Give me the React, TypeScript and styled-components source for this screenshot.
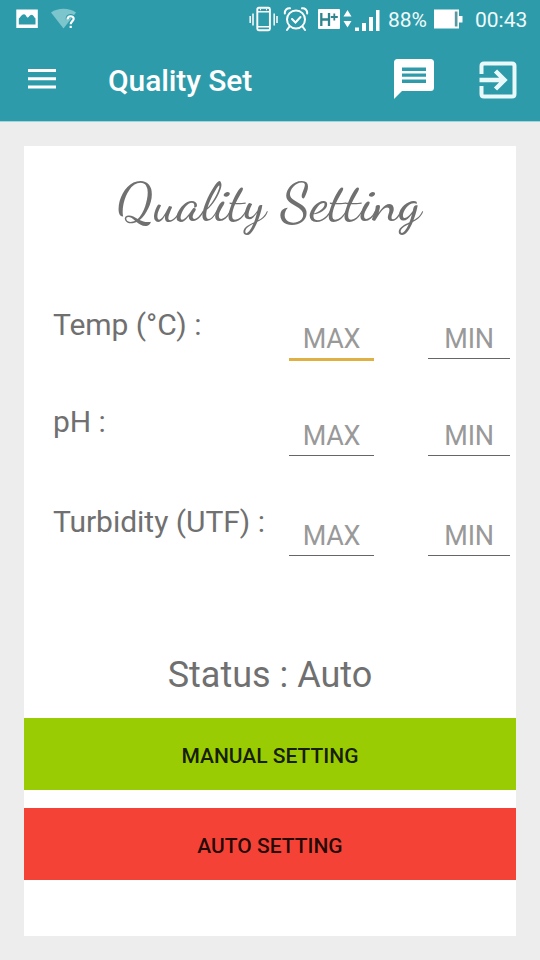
import React from "react";
import styled, { createGlobalStyle } from "styled-components";

const GlobalStyle = createGlobalStyle`
  * { box-sizing: border-box; }
  body { margin: 0; background: #ededed; font-family: Roboto, sans-serif; }
`;

const Screen = styled.div`
  width: 540px;
  height: 960px;
  display: flex;
  flex-direction: column;
  background: #ededed;
  overflow: hidden;
`;

const StatusBar = styled.div`
  flex: none;
  height: 38px;
  padding: 0 13px 0 16px;
  display: flex;
  align-items: center;
  background: #2e9baa;
  color: #fff;
`;

const Glyph = styled.svg<{ $gap?: number }>`
  display: block;
  flex: none;
  margin-right: ${(p) => p.$gap ?? 0}px;
`;

const StatusText = styled.span<{ $width: number; $gap?: number }>`
  width: ${(p) => p.$width}px;
  margin-right: ${(p) => p.$gap ?? 0}px;
  font-size: 21px;
  line-height: 38px;
  padding-top: 1px;
  white-space: nowrap;
  color: #effafa;
`;

const Spacer = styled.div`
  flex: 1;
`;

const Toolbar = styled.header`
  flex: none;
  height: 84px;
  padding: 0 22px 0 28px;
  display: flex;
  align-items: center;
  background: #2e9baa;
  border-bottom: 1px solid #a5d3d9;
  color: #fff;
`;

const ToolbarTitle = styled.h1`
  margin: 3px 0 0 52px;
  flex: 1;
  font-size: 30px;
  font-weight: 500;
  line-height: 36px;
  letter-spacing: -0.1px;
`;

const IconButton = styled.button<{ $gap?: number; $raise?: number }>`
  padding: 0 0 ${(p) => p.$raise ?? 0}px;
  border: 0;
  background: none;
  color: inherit;
  margin-right: ${(p) => p.$gap ?? 0}px;
`;

const Card = styled.main`
  margin: 24px 24px 0;
  height: 790px;
  background: #fff;
  display: flex;
  flex-direction: column;
  color: #707070;
`;

const Heading = styled.h2`
  margin: 19px 0 0;
  height: 78px;
  padding-right: 2px;
  line-height: 76px;
  text-align: center;
  font-family: "Dancing Script", "Liberation Serif", cursive;
  font-weight: 500;
  font-size: 54.5px;
  letter-spacing: 0.2px;
  white-space: nowrap;
`;

const Fields = styled.div`
  height: 415px;
  padding-top: 62px;
  display: grid;
  grid-template-rows: 97px 100px 97px;
`;

const FieldRow = styled.div`
  display: grid;
  grid-template-columns: 236px 85px 82px;
  padding-left: 29px;
  align-items: start;
`;

const Label = styled.label`
  font-size: 30px;
  line-height: 40px;
  letter-spacing: -0.03px;
  white-space: nowrap;
`;

const Entry = styled.input<{ $focused?: boolean; $shift?: number }>`
  width: 100%;
  min-width: 0;
  height: ${(p) => (p.$focused ? 56 : 54)}px;
  margin: 0 0 0 ${(p) => p.$shift ?? 0}px;
  padding: 15px 0 0;
  border: 0;
  border-bottom: ${(p) => (p.$focused ? "3px solid #dfb044" : "1px solid #666")};
  border-radius: 0;
  outline: 0;
  background: transparent;
  text-align: center;
  font: 27px Roboto, sans-serif;
  letter-spacing: -0.3px;
  color: #707070;
  &::placeholder { color: #999; opacity: 1; }
`;

const Status = styled.p`
  margin: 0;
  height: 60px;
  line-height: 34px;
  text-align: center;
  font-size: 36px;
`;

const ActionButton = styled.button<{ $color: string }>`
  flex: none;
  height: 72px;
  margin: 0 0 18px;
  padding: 3px 0 0;
  border: 0;
  background: ${(p) => p.$color};
  color: rgba(0, 0, 0, 0.87);
  font: 500 21px Roboto, sans-serif;
`;

const rows = ["Temp (°C) :", "pH :", "Turbidity (UTF) :"];

const PictureIcon = () => (
  <Glyph $gap={12} width="23" height="20" viewBox="0 0 23 20">
    <path fill="#fff" fillRule="evenodd" d="M.3.500h21.500v18.500H.3zM2.800 15.500h16.700V9.500c-1.500-1-1.800-3.500-4-3.700-2 0-2.300 2.700-3.700 2.700S10 5.200 8 5.200c-2.500 0-3.200 3-5.200 4.300z" />
  </Glyph>
);

const WifiIcon = () => (
  <Glyph width="27" height="22" viewBox="0 0 27 22">
    <path fill="#7cc5cd" d="M0 4.500C7-.5 18-.5 25 4.500L12.500 20.500z" />
    <path fill="none" stroke="#2e9baa" strokeWidth="3.400" d="M16.300 11.500c0-5 6.400-4.800 6.400-1 0 2.200-3 2.700-3 5.200M19.700 16v5" />
    <path fill="none" stroke="#fff" strokeWidth="2.200" d="M16.500 11.500c0-4.200 6.200-4.200 6.200-.7 0 2.200-3 2.600-3 5.400" />
    <rect x="18.600" y="17.800" width="2.200" height="2.200" fill="#fff" />
  </Glyph>
);

const VibrateIcon = () => (
  <Glyph $gap={5} width="29" height="26" viewBox="0 0 29 26">
    <g fill="none" stroke="#fff">
      <rect x="8.300" y="1.800" width="12.600" height="22.400" rx="1.500" strokeWidth="1.900" />
      <path strokeWidth="1.500" d="M1.200 10v7M4 7.500v12M25.200 7.500v12M28 10v7" />
      <path strokeWidth="1.500" d="M8 5.800h13M8 20.700h13M11 3.600h1M17 3.600h1" />
    </g>
  </Glyph>
);

const AlarmIcon = () => (
  <Glyph $gap={9} width="26" height="26" viewBox="0 0 26 26">
    <g fill="none" stroke="#fff" strokeWidth="2" strokeLinecap="round">
      <circle cx="13" cy="13.500" r="9" />
      <path d="M9 13l3.500 3.500 5-5.500M6.500 20.500L4 24M19.500 20.500L22 24M1.800 7.500C1.500 4 4 2 7 2.300M24.200 7.500c.3-3.500-2.200-5.500-5.200-5.200" />
    </g>
  </Glyph>
);

const NetworkIcon = () => (
  <Glyph $gap={3} width="34" height="22" viewBox="0 0 34 22">
    <rect x="0" y="1" width="22" height="20" rx="1" fill="#fff" />
    <path fill="none" stroke="#2e858d" strokeWidth="2.300" d="M3.300 5v13M11 5v13M3.300 11.500H11" />
    <path fill="none" stroke="#2e858d" strokeWidth="1.800" d="M12.800 9h7M16.300 5.500v7" />
    <path fill="#fff" d="M25.500 8.500h8L29.500 2zM25.500 13h8l-4 6.500z" />
  </Glyph>
);

const SignalIcon = () => (
  <Glyph $gap={8} width="25" height="23" viewBox="0 0 25 23">
    <path fill="#fff" d="M0 19.500h4V23H0zM7 15h4v8H7zM14 9h4v14h-4zM21 2h3.500v21H21z" />
  </Glyph>
);

const BatteryIcon = () => (
  <Glyph $gap={12} width="29" height="20" viewBox="0 0 29 20">
    <path fill="#fff" d="M0 .5h25V7h3.500v6.500H25v6H0z" />
    <path fill="#5a98a0" d="M20.800 2.500h2.700v15h-2.700z" />
  </Glyph>
);

const MenuIcon = () => (
  <Glyph width="28" height="22" viewBox="0 0 28 22">
    <path fill="#fff" d="M0 1h28v3H0zM0 9.300h28v3H0zM0 17.600h28v3H0z" />
  </Glyph>
);

const ChatIcon = () => (
  <Glyph width="42" height="42" viewBox="0 0 42 42">
    <path fill="#fff" fillRule="evenodd" d="M4.500 1h33q3.500 0 3.500 3.500v25q0 3.500-3.500 3.500H9l-8 8V4.500Q1 1 4.500 1zM9 9.500v3.400h24V9.500zM9 15.500v3.300h24v-3.300zM9 21.500V25h24v-3.500z" />
  </Glyph>
);

const ExitIcon = () => (
  <Glyph width="40" height="40" viewBox="0 0 40 40">
    <g fill="none" stroke="#e9f9f9" strokeWidth="4">
      <path d="M3.500 14V6q0-2.500 2.500-2.500h28q2.500 0 2.500 2.500v28q0 2.500-2.500 2.500H6q-2.500 0-2.500-2.500v-8" />
      <path strokeWidth="4.500" d="M1.500 20H26M17.500 11l9 9-9 9" />
    </g>
  </Glyph>
);

export default function App() {
  return (
    <>
      <GlobalStyle />
      <Screen>
        <StatusBar>
          <PictureIcon />
          <WifiIcon />
          <Spacer />
          <VibrateIcon />
          <AlarmIcon />
          <NetworkIcon />
          <SignalIcon />
          <StatusText $width={38} $gap={8}>88%</StatusText>
          <BatteryIcon />
          <StatusText $width={52}>00:43</StatusText>
        </StatusBar>
        <Toolbar>
          <IconButton aria-label="Menu" $raise={2}><MenuIcon /></IconButton>
          <ToolbarTitle>Quality Set</ToolbarTitle>
          <IconButton aria-label="Messages" $gap={43} $raise={2}><ChatIcon /></IconButton>
          <IconButton aria-label="Exit"><ExitIcon /></IconButton>
        </Toolbar>
        <Card>
          <Heading>Quality Setting</Heading>
          <Fields>
            {rows.map((label, i) => (
              <FieldRow key={label}>
                <Label>{label}</Label>
                <Entry placeholder="MAX" $focused={i === 0} />
                <Entry placeholder="MIN" $shift={54} />
              </FieldRow>
            ))}
          </Fields>
          <Status>Status : Auto</Status>
          <ActionButton $color="#99cc03">MANUAL SETTING</ActionButton>
          <ActionButton $color="#f44336">AUTO SETTING</ActionButton>
        </Card>
      </Screen>
    </>
  );
}
